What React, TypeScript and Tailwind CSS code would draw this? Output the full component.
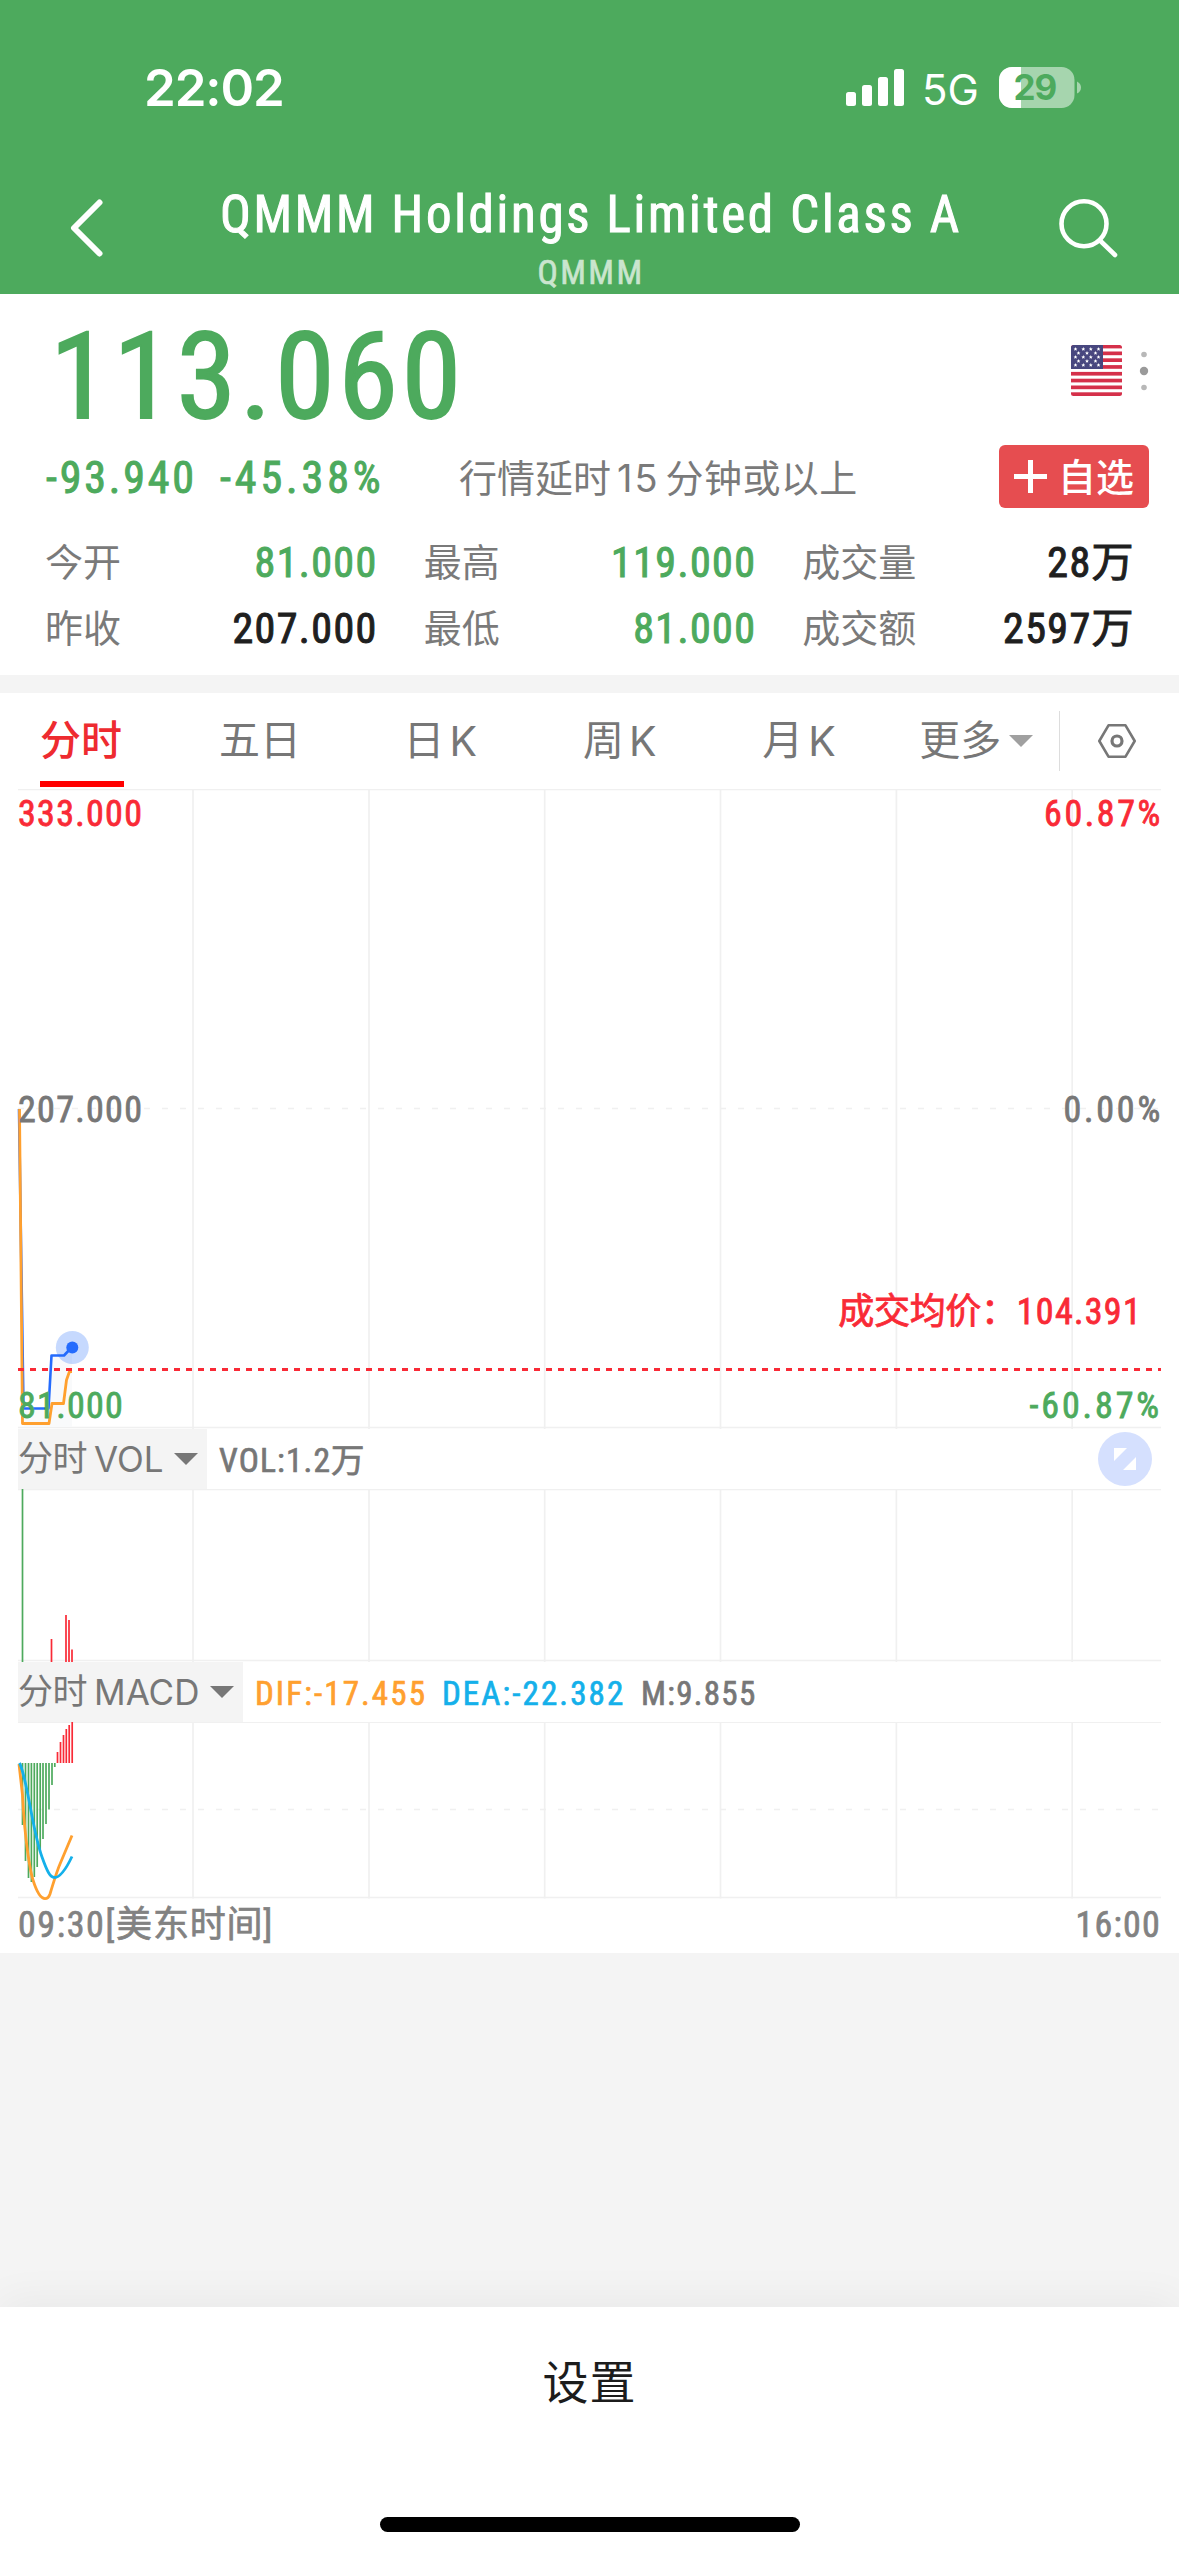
import type { ReactNode } from "react";

const GRID_X = [193, 369, 544.7, 720.5, 896.4, 1072.2];

const VOLUME_BARS = [
  { x: 22.5, top: 1489, color: "#4DAA5D" },
  { x: 51.5, top: 1639, color: "#F92A36" },
  { x: 66, top: 1615, color: "#F92A36" },
  { x: 69, top: 1620, color: "#F92A36" },
  { x: 72, top: 1649.5, color: "#F92A36" },
];

const MACD_DOWN = [
  [22.5, 1825], [25.5, 1861], [28.5, 1878], [31.4, 1882], [34.3, 1877], [37.2, 1867],
  [40.2, 1852], [43, 1839], [46, 1824], [49, 1809.5], [52, 1785], [54.8, 1767],
];

const MACD_UP = [
  [57.5, 1752], [60.5, 1742], [63.5, 1735], [66.3, 1729], [69.2, 1725], [72.2, 1722],
];

const FLAG_STARS = [0, 1, 2, 3, 4].flatMap((row) =>
  (row % 2 === 0 ? [4.5, 12.3, 19.8, 27.5] : [7.5, 16, 24.5]).map((x) => [x, 4 + row * 4]),
);

function GridLines({ top, bottom }: { top: number; bottom: number }) {
  return (
    <g stroke="#F0F0F0" strokeWidth="1.7">
      {GRID_X.map((x) => (
        <line key={x} x1={x} x2={x} y1={top} y2={bottom} />
      ))}
    </g>
  );
}

function StatusBar() {
  return (
    <div className="flex h-[175px] items-center justify-between pl-[144px] pr-[97px] text-white">
      <span className="font-['Inter'] text-[51px] font-semibold leading-none tracking-[-1.1px]">22:02</span>
      <div className="flex items-center">
        <svg width="58" height="37" viewBox="0 0 58 37" fill="#fff">
          <rect x="0" y="23" width="10" height="14" rx="2.5" />
          <rect x="16" y="16" width="10" height="21" rx="2.5" />
          <rect x="32" y="8" width="10" height="29" rx="2.5" />
          <rect x="48" y="0" width="10" height="37" rx="2.5" />
        </svg>
        <span className="ml-[18px] mt-1 w-[57px] font-['Inter'] text-[42px] leading-none">5G</span>
        <div className="relative ml-[20px] h-[41px] w-[83px]">
          <svg width="83" height="41" viewBox="0 0 83 41">
            <rect x="0" y="0" width="75.5" height="41" rx="13" fill="#A6D5AE" />
            <path d="M13 0H22V41H13A13 13 0 0 1 0 28V13A13 13 0 0 1 13 0Z" fill="#fff" />
            <path d="M78 14.5Q82 16.5 82 20.5T78 26.5Z" fill="#A6D5AE" />
          </svg>
          <span className="absolute left-[14.5px] top-[3px] font-['Inter'] text-[35px] font-bold leading-[35px] tracking-[-1px] text-[#4DAA5D]">
            29
          </span>
        </div>
      </div>
    </div>
  );
}

function NavBar() {
  return (
    <div className="grid h-[119px] grid-cols-[203px_1fr_203px] text-white">
      <svg className="ml-[66.5px] mt-[21px]" width="40" height="64" viewBox="0 0 40 64" fill="none" stroke="#fff" strokeWidth="6" strokeLinecap="round" strokeLinejoin="round">
        <path d="M32.5 6.5L7 32L32.5 57.5" />
      </svg>
      <div className="flex flex-col items-center whitespace-nowrap pl-[3px] font-stretch-semi-condensed">
        <div className="mt-[12px] text-[51px] leading-[56px] tracking-[2.7px] [-webkit-text-stroke:1px_currentColor]">QMMM Holdings Limited Class A</div>
        <div className="mt-[9px] text-[34px] leading-[40px] tracking-[2.4px] text-[#CAE5CE] [-webkit-text-stroke:0.6px_currentColor]">QMMM</div>
      </div>
      <svg className="ml-[79px] mt-[22px]" width="64" height="64" viewBox="0 0 64 64" fill="none" stroke="#fff" strokeWidth="4.6" strokeLinecap="round">
        <circle cx="29" cy="26.7" r="22.5" />
        <path d="M45.5 44L60 58" />
      </svg>
    </div>
  );
}

function UsFlag() {
  return (
    <svg width="51" height="51" viewBox="0 0 51 51">
      <clipPath id="flag-corners">
        <rect width="51" height="51" rx="2.5" />
      </clipPath>
      <g clipPath="url(#flag-corners)">
        <rect width="51" height="51" fill="#fff" />
        {[0, 1, 2, 3, 4, 5, 6, 7].map((i) => (
          <rect key={i} y={i * 6.8 - 0.3} width="51" height="3.7" fill="#D5304A" />
        ))}
        <rect width="32" height="24" fill="#48477F" />
        {FLAG_STARS.map(([x, y]) => (
          <path key={`${x}-${y}`} fill="#fff" transform={`translate(${x} ${y})`} d="M0-1.9L.6-.6 1.9-.5.9.4 1.2 1.7 0 1-1.2 1.7-.9.4-1.9-.5-.6-.6Z" />
        ))}
      </g>
    </svg>
  );
}

function Stat({ label, color, children }: { label: string; color: string; children: ReactNode }) {
  return (
    <div className="flex h-[66px] items-center justify-between pt-[2px] leading-none">
      <span className="text-[38px] text-[#7A7A7A]">{label}</span>
      <span className={`-mr-[3px] text-[42px] tracking-[1.4px] font-stretch-condensed [-webkit-text-stroke:1px_currentColor] ${color}`}>{children}</span>
    </div>
  );
}

function Quote() {
  return (
    <section className="h-[381px] bg-white">
      <div className="flex h-[140px] items-center pl-[50px] pr-[30px] pt-[27px]">
        <span className="flex-1 text-[121px] leading-none tracking-[3.5px] text-[#4DAA5D] font-stretch-condensed [-webkit-text-stroke:1.8px_currentColor]">
          113.060
        </span>
        <div className="-mt-[14px] flex items-center">
          <UsFlag />
          <svg className="ml-[17px]" width="10" height="42" viewBox="0 0 10 42">
            <circle cx="5" cy="4.5" r="2.8" fill="#B8B8B8" />
            <circle cx="5" cy="21" r="4.2" fill="#9A9A9A" />
            <circle cx="5" cy="37.5" r="2.8" fill="#B8B8B8" />
          </svg>
        </div>
      </div>
      <div className="grid h-[85px] grid-cols-[174px_239px_1fr_auto] items-center whitespace-nowrap pl-[46px] pr-[30px] leading-none">
        <span className="pt-[3px] text-[44px] tracking-[2.8px] text-[#4DAA5D] font-stretch-condensed [-webkit-text-stroke:1px_currentColor]">-93.940</span>
        <span className="pt-[3px] text-[44px] tracking-[3.9px] text-[#4DAA5D] font-stretch-condensed [-webkit-text-stroke:1px_currentColor]">-45.38%</span>
        <span className="pt-[3px] text-[38px] text-[#7A7A7A]">
          行情延时<span className="ml-[6px] mr-[6px] font-['Inter'] tracking-[2px]">15</span>
          <span className="tracking-[0.4px]">分钟或以上</span>
        </span>
        <div className="flex h-[63px] w-[150px] items-center rounded-md bg-[#E64D50] pl-[15px] text-white">
          <svg width="33" height="33" viewBox="0 0 33 33" stroke="#fff" strokeWidth="5">
            <path d="M0 16.5H33M16.5 0V33" />
          </svg>
          <span className="ml-[11px] pt-[3px] text-[38px] font-medium">自选</span>
        </div>
      </div>
      <div className="mt-[10px] grid grid-cols-3 gap-x-[49px] pl-[45px] pr-[47px]">
        <Stat label="今开" color="text-[#4DAA5D]">81.000</Stat>
        <Stat label="最高" color="text-[#4DAA5D]">119.000</Stat>
        <Stat label="成交量" color="text-[#1F1F1F]">28万</Stat>
        <Stat label="昨收" color="text-[#1F1F1F]">207.000</Stat>
        <Stat label="最低" color="text-[#4DAA5D]">81.000</Stat>
        <Stat label="成交额" color="text-[#1F1F1F]">2597万</Stat>
      </div>
    </section>
  );
}

function Tabs() {
  return (
    <nav className="flex h-[96px] items-center bg-white text-[41px] leading-none text-[#777777]">
      <div className="-ml-[7.7px] flex h-full">
        <div className="relative flex w-[179.4px] items-center justify-center pr-[2px] font-medium text-[#EE2B30]">
          分时
          <span className="absolute bottom-[2px] left-[47.7px] h-[6px] w-[84px] bg-[#FF0000]" />
        </div>
        <div className="flex w-[179.4px] items-center justify-center pr-[3px]">五日</div>
        {["日", "周", "月"].map((period) => (
          <div key={period} className="flex w-[179.4px] items-center justify-center gap-[5px] pr-[2px]">
            {period}
            <span className="font-['Inter'] tracking-[-1px]">K</span>
          </div>
        ))}
      </div>
      <span className="ml-[30px] w-[90px]">更多</span>
      <svg width="24" height="12" viewBox="0 0 24 12" fill="#A0A0A0">
        <path d="M0 0H24L12 12Z" />
      </svg>
      <span className="ml-[26px] h-[60px] w-px bg-[#DDDDDD]" />
      <svg className="ml-[38px]" width="38" height="36" viewBox="0 0 38 34" fill="none" stroke="#777777" strokeWidth="2.6" strokeLinejoin="round">
        <path d="M10.5 1.3H27.5L36.7 17L27.5 32.7H10.5L1.3 17Z" />
        <circle cx="19" cy="17" r="5" strokeWidth="3.2" />
      </svg>
    </nav>
  );
}

function PriceChart() {
  return (
    <div className="relative h-[640px] text-[36px] leading-[36px] tracking-[1.3px] font-stretch-condensed [-webkit-text-stroke:0.8px_currentColor]">
      <svg className="block" width="1179" height="640" viewBox="0 789 1179 640" fill="none">
        <GridLines top={789} bottom={1429} />
        <path d="M18 789.5H1161M18 1427.5H1161" stroke="#F0F0F0" strokeWidth="1.5" />
        <path d="M18 1108.5H1161" stroke="#F0F0F0" strokeWidth="1.6" strokeDasharray="6 12" />
        <path d="M24 1408.5H49L51.5 1355.5H64L72 1347V1427H24Z" fill="#F9FAFB" />
        <path d="M19 1109L23.5 1408.5H48.5L51.5 1355.5H64L72 1347" stroke="#246BFD" strokeWidth="2.6" strokeLinejoin="round" />
        <path d="M19.5 1109L22.5 1423.5H49L52 1403.5H63.5L66.5 1380L69.5 1371.5H72" stroke="#FFA02F" strokeWidth="2.8" strokeLinejoin="round" />
        <path d="M18 1369.5H1161" stroke="#F92A36" strokeWidth="3" strokeDasharray="6 6" />
        <circle cx="72.3" cy="1347.5" r="16.5" fill="#246BFD" fillOpacity="0.26" />
        <circle cx="72.3" cy="1347.5" r="6" fill="#246BFD" />
      </svg>
      <span className="absolute left-[18px] top-[7px] text-[#F92A36]">333.000</span>
      <span className="absolute right-[16px] top-[7px] tracking-[2.6px] text-[#F92A36]">60.87%</span>
      <span className="absolute left-[18px] top-[303px] text-[#777777]">207.000</span>
      <span className="absolute right-[16px] top-[303px] tracking-[2.8px] text-[#777777]">0.00%</span>
      <span className="absolute right-[37px] top-[505px] flex text-[#F92A36]">
        <span className="tracking-[-0.3px]">成交均价：</span>104.391
      </span>
      <span className="absolute left-[18px] top-[599px] text-[#4DAA5D]">81.000</span>
      <span className="absolute right-[17px] top-[599px] tracking-[2.9px] text-[#4DAA5D]">-60.87%</span>
    </div>
  );
}

function IndicatorName({ name }: { name: string }) {
  return (
    <div className="flex h-[60px] items-center bg-[#F4F4F4] pr-[9px] text-[35px] text-[#777777]">
      <span className="tracking-[-0.5px]">分时</span>
      <span className="ml-[7px] font-['Inter'] tracking-[0px]">{name}</span>
      <svg className="ml-[10.5px]" width="24" height="12" viewBox="0 0 24 12" fill="#777777">
        <path d="M0 0H24L12 12Z" />
      </svg>
    </div>
  );
}

function VolumeChart() {
  return (
    <>
      <div className="flex h-[60px] items-center pl-[18px] pr-[27px] leading-none">
        <IndicatorName name="VOL" />
        <span className="ml-[12px] flex-1 pt-[3px] text-[33.5px] tracking-[1.1px] text-[#777777] font-stretch-condensed [-webkit-text-stroke:0.7px_currentColor]">
          VOL:1.2万
        </span>
        <svg width="54" height="54" viewBox="0 0 54 54">
          <circle cx="27" cy="27" r="27" fill="#D5E0FE" />
          <path d="M16 16H29L16 29ZM38 25V38H25Z" fill="#fff" />
        </svg>
      </div>
      <svg className="block" width="1179" height="173" viewBox="0 1489 1179 173">
        <GridLines top={1489} bottom={1662} />
        <path d="M18 1489.5H1161M18 1660.5H1161" stroke="#F0F0F0" strokeWidth="1.5" />
        {VOLUME_BARS.map((bar) => (
          <line key={bar.x} x1={bar.x} x2={bar.x} y1={bar.top} y2="1662" stroke={bar.color} strokeWidth="1.7" />
        ))}
      </svg>
    </>
  );
}

function MacdChart() {
  return (
    <>
      <div className="flex h-[60px] items-center pl-[18px] leading-none">
        <IndicatorName name="MACD" />
        <div className="flex pl-[12px] pt-[3px] text-[33px] tracking-[2.1px] font-stretch-condensed [-webkit-text-stroke:0.7px_currentColor]">
          <span className="w-[187px] text-[#FFA02F]">DIF:-17.455</span>
          <span className="w-[199px] text-[#14B0EA]">DEA:-22.382</span>
          <span className="tracking-[1.3px] text-[#777777]">M:9.855</span>
        </div>
      </div>
      <svg className="block" width="1179" height="178" viewBox="0 1722 1179 178" fill="none">
        <GridLines top={1722} bottom={1898.5} />
        <path d="M18 1722.2H1161M18 1897.5H1161" stroke="#F0F0F0" strokeWidth="1.5" />
        <path d="M18 1809.5H1161" stroke="#F0F0F0" strokeWidth="1.6" strokeDasharray="6 12" />
        {MACD_DOWN.map(([x, y]) => (
          <line key={x} x1={x} x2={x} y1="1763" y2={y} stroke="#4DAA5D" strokeWidth="1.7" />
        ))}
        {MACD_UP.map(([x, y]) => (
          <line key={x} x1={x} x2={x} y1={y} y2="1763" stroke="#F92A36" strokeWidth="1.7" />
        ))}
        <path d="M19 1764L22.5 1795C25 1845 31 1874 33 1880C38 1896 42 1898.6 45 1898.6C47.5 1898.6 49 1897 50 1894C53 1884 57 1871 60 1864L72 1835.5" stroke="#FFA02F" strokeWidth="2.8" />
        <path d="M19.5 1763C24 1772 27 1790 31 1811C35 1832 38 1846 42 1857C47 1871 50 1877.5 54.5 1877.5C61 1877.5 67 1867 72 1856.5" stroke="#14B0EA" strokeWidth="2.8" />
      </svg>
    </>
  );
}

export default function App() {
  return (
    <div className="flex h-[2556px] w-[1179px] flex-col overflow-hidden bg-[#F4F4F4] font-['Roboto','Noto_Sans_CJK_SC',sans-serif]">
      <header className="h-[294px] bg-[#4DAA5D]">
        <StatusBar />
        <NavBar />
      </header>
      <Quote />
      <section className="mt-[18px] h-[1260px] bg-white">
        <Tabs />
        <PriceChart />
        <VolumeChart />
        <MacdChart />
        <div className="flex h-[50px] items-center justify-between pl-[18px] pr-[18px] text-[36px] leading-none tracking-[1.6px] text-[#828282] font-stretch-condensed [-webkit-text-stroke:0.7px_currentColor]">
          <span>
            09:30[<span className="tracking-[0.8px]">美东时间</span>]
          </span>
          <span className="tracking-[1.2px]">16:00</span>
        </div>
      </section>
      <footer className="mt-auto flex h-[249px] flex-col items-center bg-white shadow-[0_-6px_40px_rgba(0,0,0,0.05)]">
        <div className="flex h-[151px] items-center text-[46px] leading-none tracking-[1px] text-[#1C1C1C]">设置</div>
        <div className="mt-[59px] h-[15px] w-[420px] rounded-full bg-black" />
      </footer>
    </div>
  );
}
